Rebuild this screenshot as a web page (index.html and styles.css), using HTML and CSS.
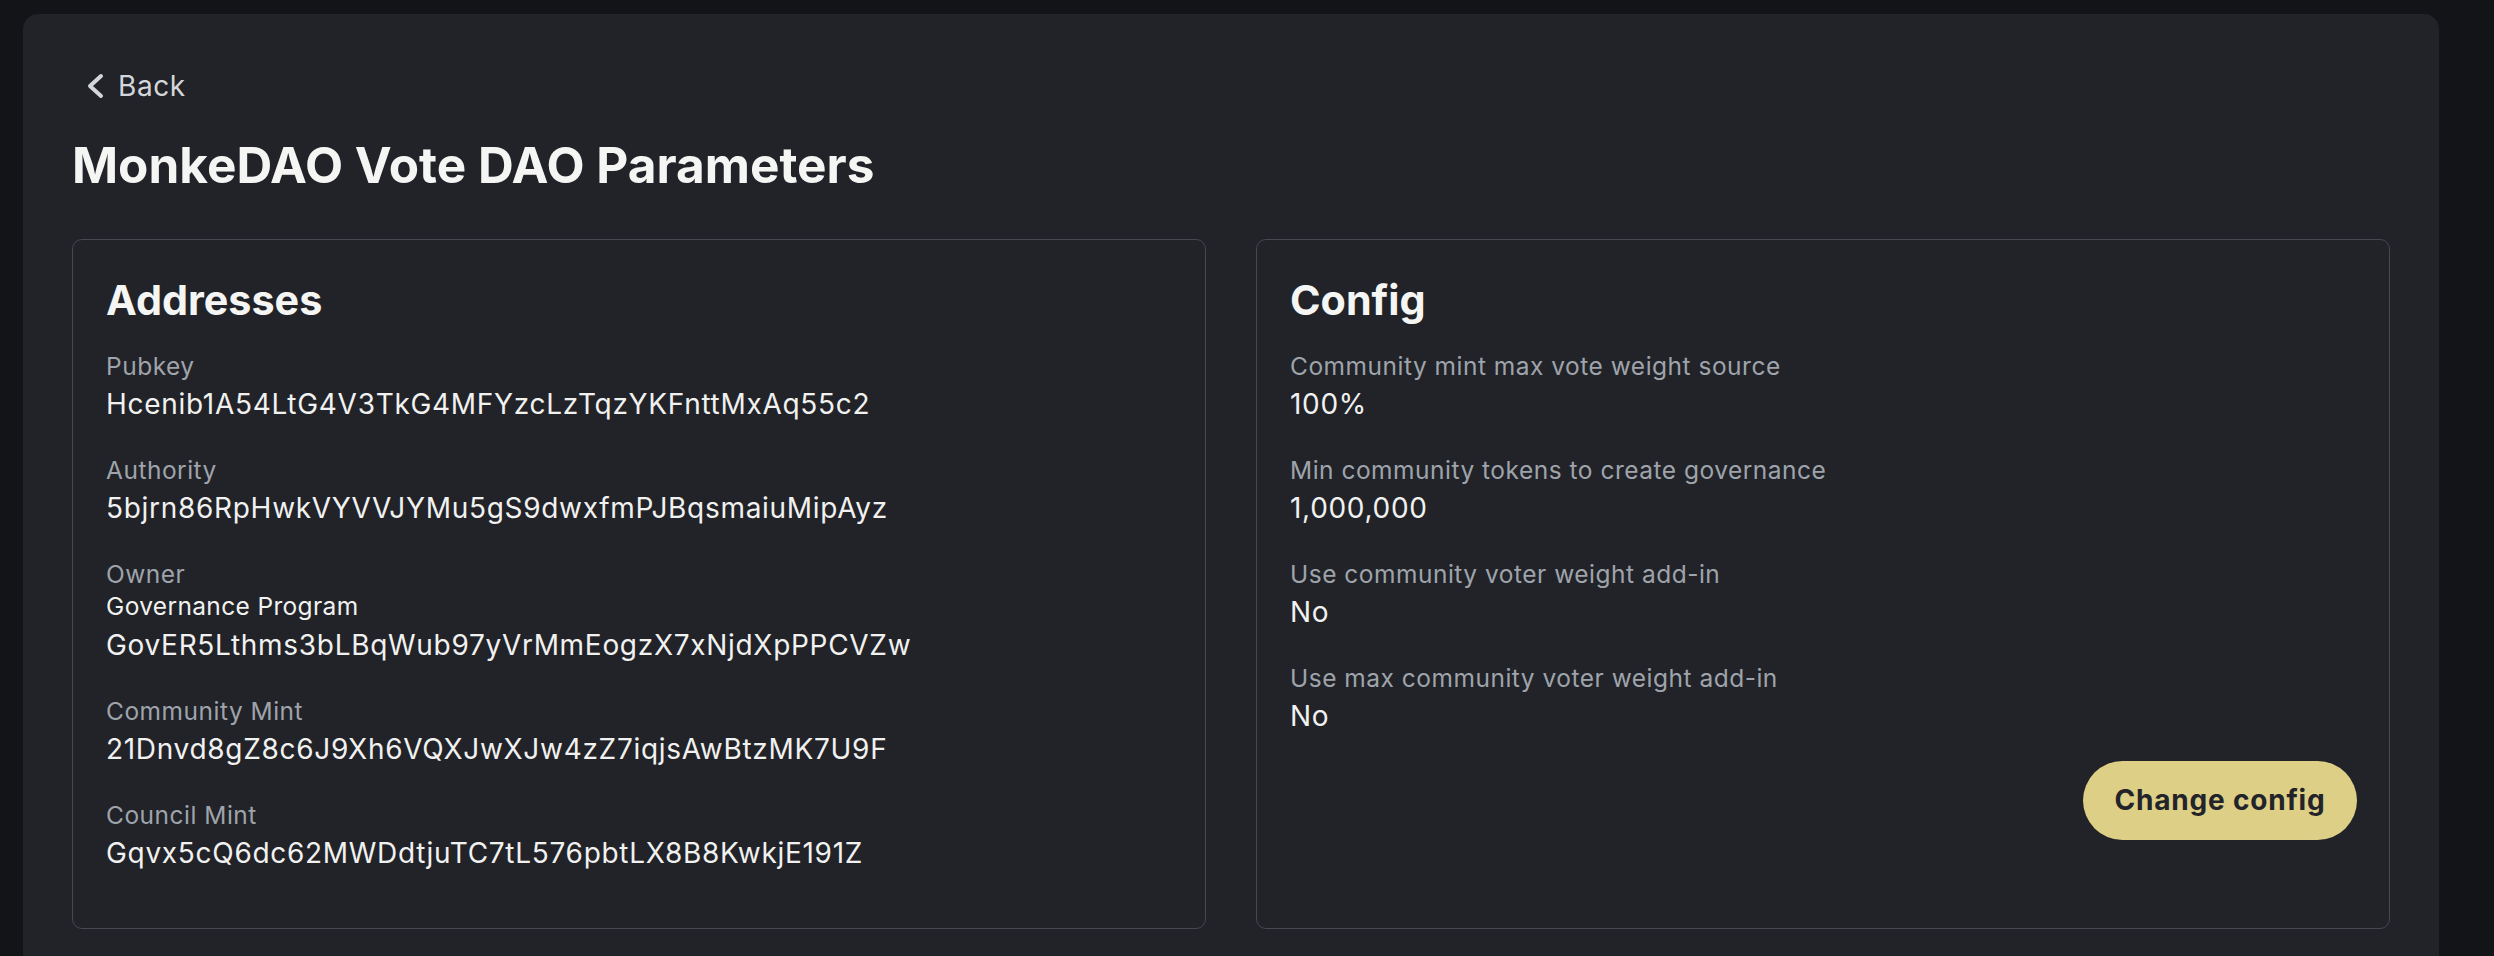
FILE: index.html
```html
<!DOCTYPE html>
<html lang="en">
<head>
<meta charset="utf-8">
<title>MonkeDAO Vote DAO Parameters</title>
<link rel="stylesheet" href="styles.css">
</head>
<body>
<div class="page">
  <main class="panel">
    <a class="back" href="#">
      <svg class="back-icon" width="18" height="28" viewBox="0 0 18 28" aria-hidden="true">
        <path d="M15 4 L4 14 L15 24" fill="none" stroke="currentColor" stroke-width="4" stroke-linecap="round" stroke-linejoin="round"/>
      </svg>
      <span>Back</span>
    </a>
    <h1 class="title">MonkeDAO Vote DAO Parameters</h1>
    <div class="cards">
      <section class="card">
        <h2 class="card-title">Addresses</h2>
        <div class="rows">
          <div class="row">
            <div class="label">Pubkey</div>
            <div class="value">Hcenib1A54LtG4V3TkG4MFYzcLzTqzYKFnttMxAq55c2</div>
          </div>
          <div class="row">
            <div class="label">Authority</div>
            <div class="value">5bjrn86RpHwkVYVVJYMu5gS9dwxfmPJBqsmaiuMipAyz</div>
          </div>
          <div class="row">
            <div class="label">Owner</div>
            <div class="sub">Governance Program</div>
            <div class="value">GovER5Lthms3bLBqWub97yVrMmEogzX7xNjdXpPPCVZw</div>
          </div>
          <div class="row">
            <div class="label">Community Mint</div>
            <div class="value">21Dnvd8gZ8c6J9Xh6VQXJwXJw4zZ7iqjsAwBtzMK7U9F</div>
          </div>
          <div class="row">
            <div class="label">Council Mint</div>
            <div class="value">Gqvx5cQ6dc62MWDdtjuTC7tL576pbtLX8B8KwkjE191Z</div>
          </div>
        </div>
      </section>
      <section class="card">
        <h2 class="card-title">Config</h2>
        <div class="rows">
          <div class="row">
            <div class="label">Community mint max vote weight source</div>
            <div class="value">100%</div>
          </div>
          <div class="row">
            <div class="label">Min community tokens to create governance</div>
            <div class="value">1,000,000</div>
          </div>
          <div class="row">
            <div class="label">Use community voter weight add-in</div>
            <div class="value">No</div>
          </div>
          <div class="row">
            <div class="label">Use max community voter weight add-in</div>
            <div class="value">No</div>
          </div>
        </div>
        <div class="actions">
          <button class="btn" type="button">Change config</button>
        </div>
      </section>
    </div>
  </main>
</div>
</body>
</html>
```

FILE: styles.css
```css
html, body {
  margin: 0;
  padding: 0;
  height: 956px;
  overflow: hidden;
  background: #131417;
}

body {
  font-family: "Inter", "Noto Sans", "Liberation Sans", sans-serif;
  color: #f1f1f0;
}

.page {
  padding: 14px 55px 0 23px;
  height: 956px;
  box-sizing: border-box;
  overflow: hidden;
}

.panel {
  display: block;
  background: #212328;
  border-radius: 15px 15px 0 0;
  padding: 51px 49px 20px 49px;
  height: 942px;
  box-sizing: border-box;
}

.back {
  display: inline-flex;
  align-items: center;
  gap: 14px;
  color: #d3d6db;
  text-decoration: none;
  font-size: 28px;
  line-height: 42px;
  height: 42px;
  margin-left: 14px;
  letter-spacing: 0.6px;
}

.back-icon {
  display: block;
  flex: none;
}

.title {
  margin: 28px 0 0 0;
  font-size: 49.5px;
  line-height: 60px;
  font-weight: 700;
  color: #f5f5f4;
}

.cards {
  display: grid;
  grid-template-columns: 1fr 1fr;
  gap: 50px;
  margin-top: 44px;
}

.card {
  border: 1px solid #454950;
  border-radius: 10px;
  padding: 32px 32px 57px 33px;
  display: flex;
  flex-direction: column;
}

.card-title {
  margin: 0;
  font-size: 41.3px;
  line-height: 56px;
  font-weight: 700;
  color: #f5f5f4;
}

.rows {
  display: flex;
  flex-direction: column;
  gap: 32.5px;
  margin-top: 22px;
}

.row {
  display: flex;
  flex-direction: column;
}

.label {
  font-size: 24.5px;
  line-height: 32px;
  color: #9fa3ab;
  letter-spacing: 0.5px;
}

.sub {
  font-size: 24.5px;
  line-height: 33px;
  color: #f1f1f0;
  letter-spacing: 0.35px;
}

.value {
  font-size: 28px;
  line-height: 36px;
  margin-top: 3.5px;
  color: #f1f1f0;
  letter-spacing: 0.7px;
}

.actions {
  display: flex;
  justify-content: flex-end;
  margin-top: 27px;
}

.btn {
  font-family: inherit;
  font-size: 28px;
  font-weight: 700;
  color: #22242a;
  background: #ddcf86;
  border: none;
  border-radius: 40px;
  height: 79px;
  width: 274px;
  padding: 0;
  letter-spacing: 0.8px;
}
```
